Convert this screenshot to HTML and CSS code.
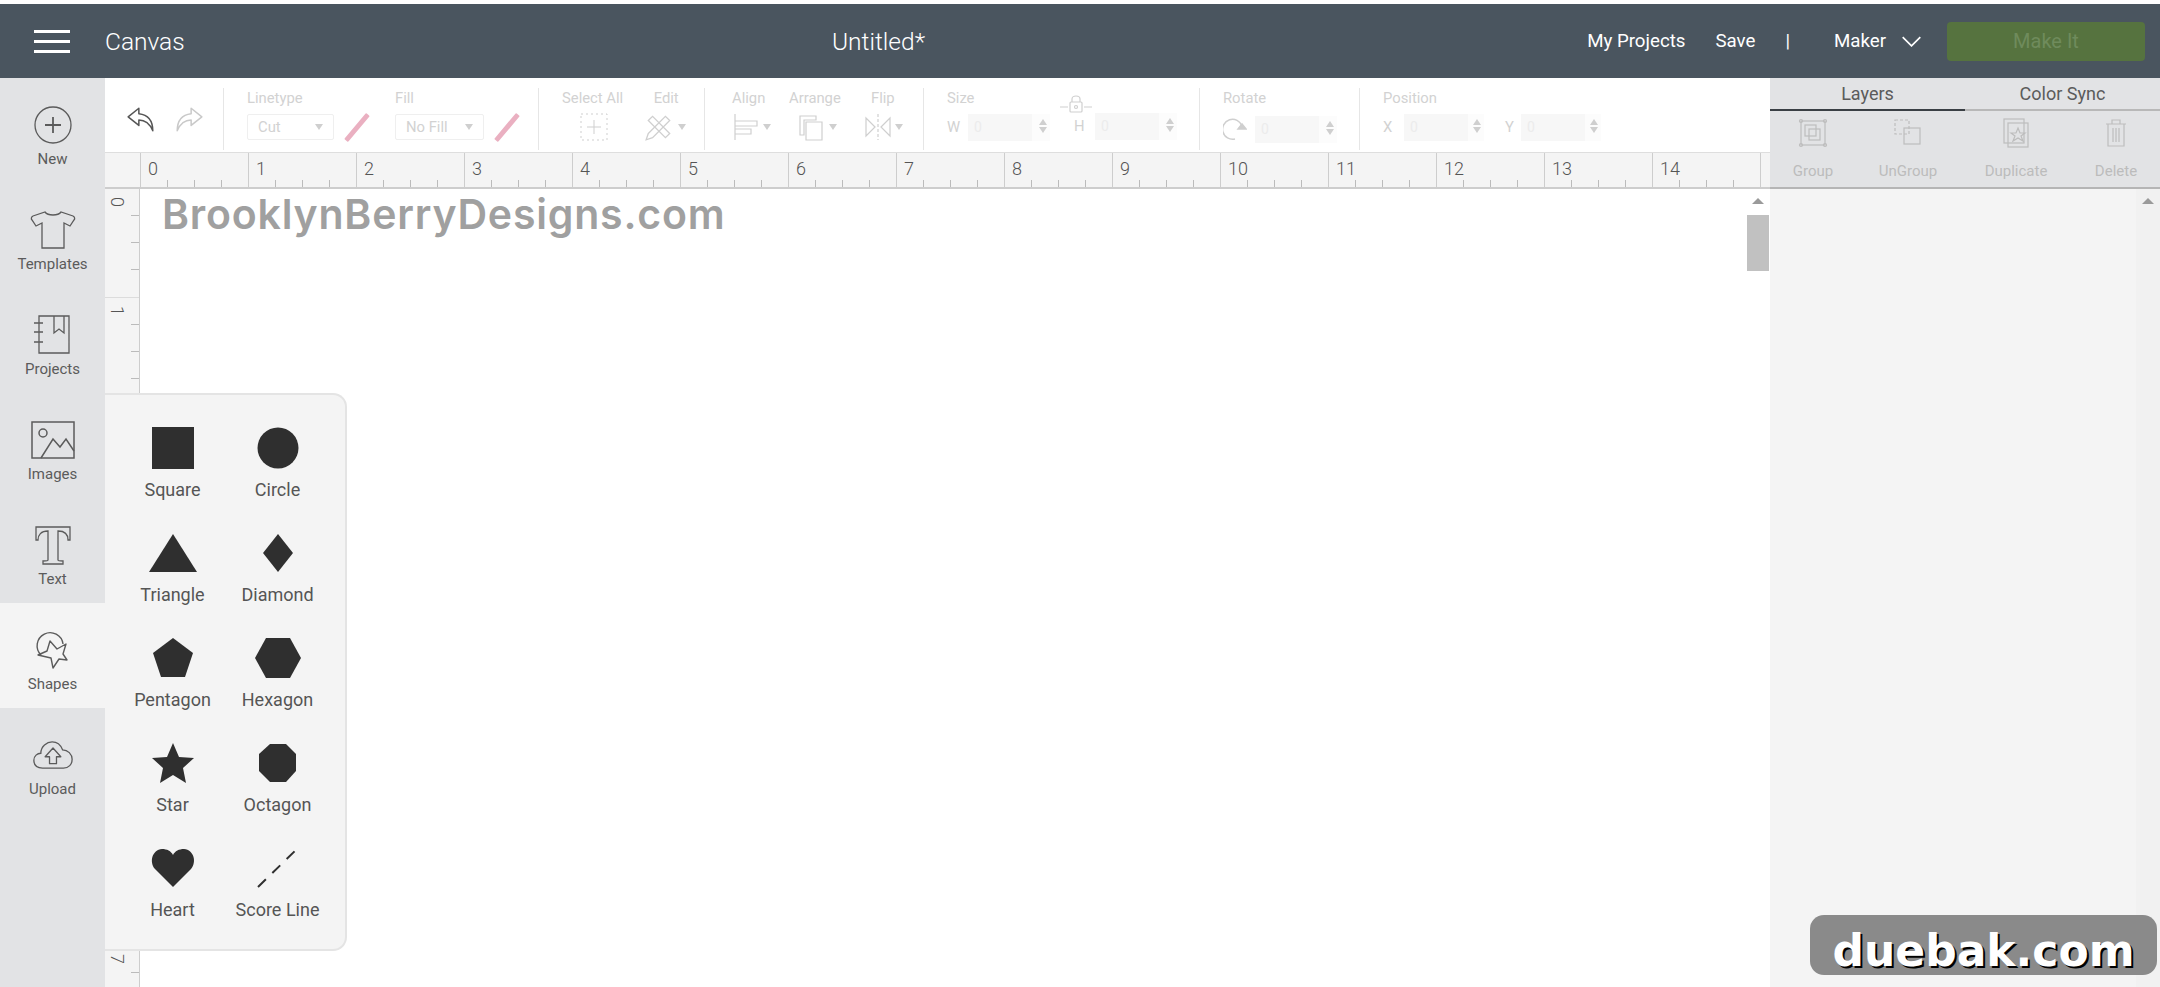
FILE: index.html
```html
<!DOCTYPE html>
<html lang="en">
<head>
    <meta charset="UTF-8">
    <title>Canvas</title>
    <link rel="stylesheet" href="styles.css">
</head>
<body>
    <div class="app">
        <header class="top-bar">
            <div class="top-left">
                <div class="burger"><span></span><span></span><span></span></div>
                <div class="page-name">Canvas</div>
            </div>
            <div class="doc-title">Untitled*</div>
            <div class="top-right">
                <span class="top-link">My Projects</span>
                <span class="top-link">Save</span>
                <span class="top-link pipe">|</span>
                <span class="top-link maker">Maker</span>
                <svg class="chevron" viewBox="0 0 18 10" fill="none" stroke="currentColor" stroke-width="1.5"><path d="M1 1l8 8 8-8"></path></svg>
                <div class="make-it">Make It</div>
            </div>
        </header>

        <div class="main">
            <nav class="sidebar">
                <div class="side-item">
                    <svg viewBox="0 0 40 40" fill="none" stroke="currentColor" stroke-width="1.3"><circle cx="20" cy="20" r="18"></circle><path d="M20 12v16M12 20h16" stroke-width="1.8"></path></svg>
                    <span>New</span>
                </div>
                <div class="side-item">
                    <svg class="wide" viewBox="0 0 46 40" fill="none" stroke="currentColor" stroke-width="1.3"><path d="M15 2c3 4 13 4 16 0l12 4c2 1 2 3 1 4l-4 6-6-3v25H12V13l-6 3-4-6c-1-1-1-3 1-4z"></path></svg>
                    <span>Templates</span>
                </div>
                <div class="side-item">
                    <svg viewBox="0 0 40 40" fill="none" stroke="currentColor" stroke-width="1.3"><path d="M6 1h30v37H6zM21 1v17l5-4 5 4V1M1 8h9M1 17h9M1 27h9"></path></svg>
                    <span>Projects</span>
                </div>
                <div class="side-item">
                    <svg class="wide" viewBox="0 0 46 40" fill="none" stroke="currentColor" stroke-width="1.5"><rect x="2" y="2" width="42" height="36"></rect><circle cx="13" cy="13" r="4"></circle><path d="M11 38l12-19 7 8 6-8 8 12"></path></svg>
                    <span>Images</span>
                </div>
                <div class="side-item">
                    <svg viewBox="0 0 40 40" fill="none" stroke="currentColor" stroke-width="1.3"><path d="M3 2h34v13h-2c0-5-3-9-10-9v29c0 1 1 1 5 1v3H10v-3c4 0 5 0 5-1V6C8 6 5 10 5 15H3z"></path></svg>
                    <span>Text</span>
                </div>
                <div class="side-item active">
                    <svg viewBox="0 0 40 40" fill="none" stroke="currentColor" stroke-width="1.4"><path d="M8 25A13 13 0 1 1 30 14"></path><path d="M17 11l7 8 9-5-3 10 4 6-8-1-6 9-2-10-13-3 9-4z" stroke-linejoin="round"></path></svg>
                    <span>Shapes</span>
                </div>
                <div class="side-item">
                    <svg viewBox="0 0 46 36" fill="none" stroke="currentColor" stroke-width="1.5"><path d="M11 33C4 33 1 29 1 24c0-5 4-8 8-8 0-8 7-13 13-13 6 0 10 4 12 9 6 0 11 5 11 11s-4 10-10 10z"></path><path d="M23 10l-9 10h5v8h8v-8h5z" stroke-linejoin="round"></path></svg>
                    <span>Upload</span>
                </div>
            </nav>

            <section class="workspace">
                <div class="toolbar">
                    <div class="tool-group history">
                        <svg class="undo" viewBox="0 0 28 24" fill="none" stroke="#555" stroke-width="1.4"><path d="M12 2L2 10l10 8v-5c6 0 10 3 13 10 0-9-4-15-13-16z" stroke-linejoin="round"></path></svg>
                        <svg class="undo" viewBox="0 0 28 24" fill="none" stroke="#c9c9c9" stroke-width="1.4"><path d="M16 2l10 8-10 8v-5c-6 0-10 3-13 10 0-9 4-15 13-16z" stroke-linejoin="round"></path></svg>
                    </div>
                    <div class="tool-group line-group">
                        <div class="field">
                            <label>Linetype</label>
                            <div class="control-row">
                                <div class="select line-select">Cut<i class="caret"></i></div>
                                <i class="swatch"></i>
                            </div>
                        </div>
                        <div class="field">
                            <label>Fill</label>
                            <div class="control-row">
                                <div class="select fill-select">No Fill<i class="caret"></i></div>
                                <i class="swatch"></i>
                            </div>
                        </div>
                    </div>
                    <div class="tool-group select-group">
                        <div class="field center select-all">
                            <label>Select All</label>
                            <svg class="tool-icon" viewBox="0 0 28 28" fill="none" stroke="#cfcfcf"><rect x="1" y="1" width="26" height="26" stroke-dasharray="2 3"></rect><path d="M14 7v14M7 14h14"></path></svg>
                        </div>
                        <div class="field center edit-field">
                            <label>Edit</label>
                            <div class="control-row">
                                <svg class="tool-icon edit-icon" viewBox="0 0 28 28" fill="none" stroke="#cfcfcf" stroke-width="1.2"><path d="M4 20L20 4l4 4L8 24l-6 2zM4 8l4-4 16 16-4 4z"></path></svg>
                                <i class="caret"></i>
                            </div>
                        </div>
                    </div>
                    <div class="tool-group arrange-group">
                        <div class="field align-field">
                            <label>Align</label>
                            <div class="control-row">
                                <svg class="tool-icon align-icon" viewBox="0 0 24 28" fill="none" stroke="#cfcfcf" stroke-width="1.2"><path d="M1 1v26M1 8h22v5H1M1 16h16v5H1"></path></svg>
                                <i class="caret"></i>
                            </div>
                        </div>
                        <div class="field arrange-field">
                            <label>Arrange</label>
                            <div class="control-row">
                                <svg class="tool-icon" viewBox="0 0 28 28" fill="none" stroke="#cfcfcf" stroke-width="1.2"><path d="M3 3h16v4H7v15H3zM9 9h16v18H9z"></path></svg>
                                <i class="caret"></i>
                            </div>
                        </div>
                        <div class="field flip-field">
                            <label>Flip</label>
                            <div class="control-row">
                                <svg class="tool-icon" viewBox="0 0 28 28" fill="none" stroke="#cfcfcf" stroke-width="1.2"><path d="M14 1v26" stroke-dasharray="3 2"></path><path d="M11 14L2 5v18zM17 14l9-9v18z"></path></svg>
                                <i class="caret"></i>
                            </div>
                        </div>
                    </div>
                    <div class="tool-group size-group">
                        <div class="field">
                            <label>Size</label>
                            <div class="control-row">
                                <span class="axis">W</span>
                                <div class="number w-input">0<i class="spin"></i></div>
                            </div>
                        </div>
                        <div class="field lock-field">
                            <svg class="lock" viewBox="0 0 36 20" fill="none" stroke="#cfcfcf" stroke-width="1.2"><path d="M14 8V5c0-4 8-4 8 0v3M2 13h8M26 13h8"></path><rect x="12" y="8" width="12" height="10" rx="1"></rect><circle cx="18" cy="13" r="1.5"></circle></svg>
                            <div class="control-row">
                                <span class="axis">H</span>
                                <div class="number h-input">0<i class="spin"></i></div>
                            </div>
                        </div>
                    </div>
                    <div class="tool-group rotate-group">
                        <div class="field">
                            <label>Rotate</label>
                            <div class="control-row rotate-row">
                                <svg class="rotate-icon" viewBox="0 0 24 24" fill="none" stroke="#cfcfcf" stroke-width="1.5"><path d="M19 9A10 10 0 1 0 12 22"></path><path d="M15 12h8l-4-5z" fill="#cfcfcf"></path></svg>
                                <div class="number h-input">0<i class="spin"></i></div>
                            </div>
                        </div>
                    </div>
                    <div class="tool-group">
                        <div class="field">
                            <label>Position</label>
                            <div class="control-row">
                                <span class="axis">X</span>
                                <div class="number pos-input">0<i class="spin"></i></div>
                                <span class="axis y-axis">Y</span>
                                <div class="number pos-input y-input">0<i class="spin"></i></div>
                            </div>
                        </div>
                    </div>
                </div>

                <div class="ruler-top">
                    <div class="ruler-corner"></div>
                    <div class="tick-cell">0</div>
                    <div class="tick-cell">1</div>
                    <div class="tick-cell">2</div>
                    <div class="tick-cell">3</div>
                    <div class="tick-cell">4</div>
                    <div class="tick-cell">5</div>
                    <div class="tick-cell">6</div>
                    <div class="tick-cell">7</div>
                    <div class="tick-cell">8</div>
                    <div class="tick-cell">9</div>
                    <div class="tick-cell">10</div>
                    <div class="tick-cell">11</div>
                    <div class="tick-cell">12</div>
                    <div class="tick-cell">13</div>
                    <div class="tick-cell">14</div>
                    <div class="tick-cell end"></div>
                </div>

                <div class="canvas-row">
                    <div class="ruler-left">
                        <div class="tick-row"><span>0</span></div>
                        <div class="tick-row"><span>1</span></div>
                        <div class="tick-row"><span>2</span></div>
                        <div class="tick-row"><span>3</span></div>
                        <div class="tick-row"><span>4</span></div>
                        <div class="tick-row"><span>5</span></div>
                        <div class="tick-row"><span>6</span></div>
                        <div class="tick-row"><span>7</span></div>
                    </div>
                    <div class="canvas">
                        <div class="watermark">BrooklynBerryDesigns.com</div>
                    </div>
                    <div class="scroll-track">
                        <i class="scroll-up"></i>
                        <div class="scroll-thumb"></div>
                    </div>
                </div>

                <div class="shapes-menu">
                    <div class="shape"><svg viewBox="0 0 42 42"><path d="M0 0h42v42H0z"></path></svg><span>Square</span></div>
                    <div class="shape"><svg viewBox="0 0 42 42"><circle cx="21" cy="21" r="20.5"></circle></svg><span>Circle</span></div>
                    <div class="shape"><svg viewBox="0 0 48 42"><path d="M24 2l24 38H0z"></path></svg><span>Triangle</span></div>
                    <div class="shape"><svg viewBox="0 0 42 42"><path d="M21 2l15 19-15 19L6 21z"></path></svg><span>Diamond</span></div>
                    <div class="shape"><svg viewBox="0 0 42 42"><path d="M21 1l20 15-8 24H9L1 16z"></path></svg><span>Pentagon</span></div>
                    <div class="shape"><svg viewBox="0 0 46 42"><path d="M11 1h24l11 20-11 20H11L0 21z"></path></svg><span>Hexagon</span></div>
                    <div class="shape"><svg viewBox="0 0 42 42"><path d="M21 1l6 14 15 1-11 10 3 15-13-8-13 8 3-15L0 16l15-1z"></path></svg><span>Star</span></div>
                    <div class="shape"><svg viewBox="0 0 42 42"><path d="M13 2h16l10 10v17L29 40H13L2 29V12z"></path></svg><span>Octagon</span></div>
                    <div class="shape"><svg viewBox="0 0 44 42"><path d="M22 40L4 22C-2 15 1 3 11 2c5 0 9 2 11 6 2-4 6-6 11-6 10 1 13 13 7 20z"></path></svg><span>Heart</span></div>
                    <div class="shape"><svg viewBox="0 0 42 42"><path class="score" d="M1 40L41 1" stroke-dasharray="11 9"></path></svg><span>Score Line</span></div>
                </div>
            </section>

            <aside class="layers">
                <div class="tabs">
                    <div class="tab on">Layers</div>
                    <div class="tab">Color Sync</div>
                </div>
                <div class="layer-actions">
                    <div class="layer-btn group-btn">
                        <svg viewBox="0 0 30 30" fill="none" stroke="#bdbdbd" stroke-width="1.2"><rect x="3" y="3" width="24" height="24"></rect><rect x="7" y="7" width="11" height="11"></rect><rect x="11" y="11" width="11" height="11"></rect><circle cx="3" cy="3" r="1.5"></circle><circle cx="27" cy="3" r="1.5"></circle><circle cx="3" cy="27" r="1.5"></circle><circle cx="27" cy="27" r="1.5"></circle></svg>
                        <span>Group</span>
                    </div>
                    <div class="layer-btn ungroup-btn">
                        <svg viewBox="0 0 30 30" fill="none" stroke="#bdbdbd" stroke-width="1.2"><rect x="2" y="2" width="14" height="14" stroke-dasharray="3 2"></rect><rect x="11" y="10" width="16" height="16"></rect></svg>
                        <span>UnGroup</span>
                    </div>
                    <div class="layer-btn dup-btn">
                        <svg viewBox="0 0 30 30" fill="none" stroke="#bdbdbd" stroke-width="1.2"><rect x="3" y="1" width="20" height="24"></rect><rect x="7" y="5" width="20" height="24"></rect><path d="M17 10l2 5 5 0-4 3 2 5-5-3-5 3 2-5-4-3 5 0z"></path></svg>
                        <span>Duplicate</span>
                    </div>
                    <div class="layer-btn del-btn">
                        <svg viewBox="0 0 30 30" fill="none" stroke="#bdbdbd" stroke-width="1.2"><path d="M5 6h20M11 6V2h8v4M7 6v22h16V6M12 10v14M15 10v14M18 10v14"></path></svg>
                        <span>Delete</span>
                    </div>
                </div>
                <div class="layer-list">
                    <div class="list-body"></div>
                    <div class="list-scroll"><i class="scroll-up"></i></div>
                </div>
            </aside>
        </div>

        <div class="site-badge">duebak.com</div>
    </div>
</body>
</html>
```

FILE: styles.css
```css
:root {
    --header: #4a555f;
    --side: #e2e3e5;
    --soft: #f4f4f4;
    --line: #cdcdcd;
    --faint: #d2d2d2;
    --text: #5b5b5b;
}

* {
    margin: 0;
    padding: 0;
    box-sizing: border-box;
    font-family: Roboto, "Liberation Sans", sans-serif;
}

html, body {
    height: 100%;
    overflow: hidden;
    background-color: #ffffff;
}

i {
    display: block;
}

.app {
    height: 100vh;
    padding-top: 4px;
    display: flex;
    flex-direction: column;
    position: relative;
}

/* top bar */
.top-bar {
    height: 74px;
    flex: none;
    background-color: var(--header);
    color: #ffffff;
    display: flex;
    align-items: center;
    position: relative;
}

.top-left {
    display: flex;
    align-items: center;
}

.burger {
    width: 36px;
    margin-left: 34px;
    display: flex;
    flex-direction: column;
    gap: 7px;
}

.burger span {
    height: 3px;
    background-color: #ffffff;
}

.page-name {
    margin-left: 35px;
    font-size: 24.5px;
    font-weight: 300;
}

.doc-title {
    position: absolute;
    left: 832px;
    font-size: 24.5px;
    font-weight: 300;
}

.top-right {
    margin-left: auto;
    display: flex;
    align-items: center;
    padding-right: 15px;
}

.top-link {
    font-size: 18.7px;
    margin-right: 30px;
}

.pipe {
    margin-right: 44px;
}

.maker {
    margin-right: 15px;
}

.chevron {
    width: 21px;
    height: 11px;
    margin-right: 25px;
}

.make-it {
    width: 198px;
    height: 39px;
    background-color: #56733f;
    border-radius: 4px;
    color: #6f8b5c;
    font-size: 20px;
    display: flex;
    align-items: center;
    justify-content: center;
}

/* layout */
.main {
    flex: 1;
    display: flex;
    min-height: 0;
}

.sidebar {
    width: 105px;
    flex: none;
    background-color: var(--side);
}

.side-item {
    height: 105px;
    padding-top: 27px;
    display: flex;
    flex-direction: column;
    align-items: center;
    color: var(--text);
    font-size: 15px;
}

.side-item svg {
    width: 40px;
    height: 40px;
    margin-bottom: 5px;
    flex: none;
}

.side-item svg.wide {
    width: 46px;
}

.side-item.active {
    background-color: var(--soft);
}

.workspace {
    flex: 1;
    min-width: 0;
    display: flex;
    flex-direction: column;
    position: relative;
}

/* toolbar */
.toolbar {
    height: 74px;
    flex: none;
    background-color: #ffffff;
    display: flex;
    align-items: stretch;
    padding: 10px 0 2px;
}

.tool-group {
    display: flex;
    align-items: flex-start;
    padding: 2px 0 0 23px;
    border-right: 1px solid #e6e6e6;
}

.tool-group:last-child {
    border-right: none;
}

.history {
    width: 119px;
    padding: 0 0 0 21px;
    gap: 18px;
    align-items: center;
}

.undo {
    width: 30px;
    height: 26px;
}

.line-group {
    width: 315px;
    gap: 21px;
}

.select-group {
    width: 166px;
    gap: 24px;
}

.edit-field {
    margin-left: -1px;
}

.edit-field .control-row {
    margin-left: -3px;
}

.arrange-group {
    width: 219px;
    padding-left: 27px;
}

.align-field {
    width: 57px;
}

.align-icon {
    width: 23px;
}

.arrange-field {
    width: 82px;
}

.arrange-field .control-row {
    margin-left: 7px;
}

.arrange-field .tool-icon {
    width: 30px;
}

.arrange-field .caret {
    margin-left: 1px;
}

.flip-field .control-row {
    margin-left: -7px;
}

.size-group {
    width: 276px;
}

.rotate-group {
    width: 160px;
}

.field {
    display: flex;
    flex-direction: column;
    gap: 7px;
}

.field.center {
    align-items: center;
}

.field label {
    font-size: 14.8px;
    line-height: 16px;
    color: var(--faint);
    white-space: nowrap;
}

.control-row {
    display: flex;
    align-items: center;
    height: 28px;
}

.select {
    height: 26px;
    border: 1px solid #efefef;
    border-radius: 2px;
    padding: 0 10px;
    font-size: 14.8px;
    color: var(--faint);
    display: flex;
    align-items: center;
    justify-content: space-between;
}

.line-select {
    width: 87px;
}

.fill-select {
    width: 89px;
}

.caret {
    width: 0;
    height: 0;
    border-left: 4px solid transparent;
    border-right: 4px solid transparent;
    border-top: 6px solid #cfcfcf;
}

.swatch {
    width: 34px;
    height: 5px;
    margin-left: 6px;
    background-color: #eab0c1;
    transform: rotate(-50deg);
    border-radius: 1px;
}

.tool-icon {
    width: 28px;
    height: 28px;
}

.select-all .tool-icon {
    margin-left: 3px;
}

.edit-icon {
    width: 32px;
    height: 30px;
}

.tool-icon + .caret {
    margin-left: 3px;
}

.axis {
    width: 16px;
    font-size: 14.8px;
    color: var(--faint);
}

.y-axis {
    margin-left: 21px;
}

.number {
    height: 27px;
    width: 82px;
    margin-left: 5px;
    padding-left: 6px;
    font-size: 14px;
    line-height: 27px;
    color: #ececec;
    background: linear-gradient(90deg, #f7f7f7 64px, #fcfcfc 64px);
    position: relative;
}

.h-input {
    width: 82px;
}

.pos-input {
    width: 80px;
}

.y-input {
    margin-left: 0;
}

.spin {
    position: absolute;
    right: 3px;
    top: 5px;
    width: 0;
    height: 0;
    border-left: 4px solid transparent;
    border-right: 4px solid transparent;
    border-bottom: 6px solid #cfcfcf;
}

.spin::after {
    content: "";
    position: absolute;
    left: -4px;
    top: 8px;
    width: 0;
    height: 0;
    border-left: 4px solid transparent;
    border-right: 4px solid transparent;
    border-top: 6px solid #cfcfcf;
}

.lock-field {
    margin-left: 24px;
    gap: 0;
}

.lock {
    width: 36px;
    height: 20px;
    margin-left: -16px;
    margin-top: 4px;
    margin-bottom: -2px;
}

.rotate-row {
    margin-top: 2px;
}

.rotate-icon {
    width: 24px;
    height: 24px;
    margin-right: 3px;
}

/* rulers */
.ruler-top {
    height: 37px;
    flex: none;
    background-color: var(--soft);
    border-top: 1px solid #dedede;
    border-bottom: 2px solid var(--line);
    display: flex;
}

.ruler-corner {
    width: 35px;
    flex: none;
}

.tick-cell {
    width: 108px;
    flex: none;
    padding: 5px 0 0 7px;
    font-size: 18px;
    font-weight: 300;
    color: #555;
    border-left: 1px solid var(--line);
    background-image:
        linear-gradient(#bbb, #bbb),
        linear-gradient(#bbb, #bbb),
        linear-gradient(#bbb, #bbb);
    background-size: 1px 7px;
    background-repeat: no-repeat;
    background-position: 26px 100%, 53px 100%, 80px 100%;
}

.tick-cell.end {
    width: 9px;
    background-image: none;
}

.canvas-row {
    flex: 1;
    display: flex;
    min-height: 0;
}

.ruler-left {
    width: 35px;
    flex: none;
    background-color: var(--soft);
    border-right: 1px solid var(--line);
    overflow: hidden;
}

.tick-row {
    height: 108px;
    border-top: 1px solid #dcdcdc;
    padding: 8px 0 0 5px;
    background-image:
        linear-gradient(#bbb, #bbb),
        linear-gradient(#bbb, #bbb),
        linear-gradient(#bbb, #bbb);
    background-size: 8px 1px;
    background-repeat: no-repeat;
    background-position: 100% 26px, 100% 53px, 100% 80px;
}

.tick-row:first-child {
    border-top: none;
}

.tick-row span {
    display: block;
    writing-mode: vertical-rl;
    font-size: 18px;
    font-weight: 300;
    color: #555;
    line-height: 14px;
}

.canvas {
    flex: 1;
    background-color: #ffffff;
    position: relative;
}

.watermark {
    position: absolute;
    left: 22px;
    top: 0;
    font-family: Inter, "Open Sans", sans-serif;
    font-size: 41px;
    font-weight: 600;
    letter-spacing: 0.8px;
    color: #a0a0a0;
    white-space: nowrap;
}

.scroll-track {
    width: 24px;
    flex: none;
    background-color: #ffffff;
    padding: 9px 1px 0 1px;
}

.scroll-up {
    width: 0;
    height: 0;
    margin: 0 auto;
    border-left: 6px solid transparent;
    border-right: 6px solid transparent;
    border-bottom: 6px solid #9a9a9a;
}

.scroll-thumb {
    height: 56px;
    margin-top: 11px;
    background-color: #c1c1c1;
}

/* shapes flyout */
.shapes-menu {
    position: absolute;
    left: 0;
    top: 315px;
    width: 242px;
    height: 558px;
    padding: 7px 16px 0 15px;
    background-color: var(--soft);
    border: 2px solid #e4e4e4;
    border-left: none;
    border-radius: 0 14px 14px 0;
    display: grid;
    grid-template-columns: 105px 105px;
    grid-auto-rows: 105px;
    align-content: start;
    z-index: 2;
}

.shape {
    display: flex;
    flex-direction: column;
    align-items: center;
    padding-top: 25px;
    font-size: 18px;
    color: #555;
}

.shape svg {
    height: 42px;
    width: 48px;
    fill: #2f2f2f;
    margin-bottom: 10px;
    flex: none;
}

.score {
    fill: none;
    stroke: #2f2f2f;
    stroke-width: 2;
}

/* right panel */
.layers {
    width: 390px;
    flex: none;
    display: flex;
    flex-direction: column;
    background-color: var(--soft);
}

.tabs {
    height: 33px;
    flex: none;
    display: flex;
    background-color: var(--side);
}

.tab {
    flex: 1;
    font-size: 18px;
    font-weight: 400;
    color: var(--text);
    text-align: center;
    line-height: 32px;
    border-bottom: 2px solid #b8b8b8;
}

.tab.on {
    border-bottom-color: #3a3f44;
}

.layer-actions {
    height: 78px;
    flex: none;
    position: relative;
    display: flex;
    background-color: var(--side);
    border-bottom: 2px solid #b5b5b5;
}

.layer-btn {
    display: flex;
    flex-direction: column;
    align-items: center;
    padding-top: 7px;
    font-size: 15px;
    color: #bcbcbc;
}

.layer-btn svg {
    width: 30px;
    height: 30px;
    margin-bottom: 14px;
}

.group-btn {
    width: 86px;
}

.ungroup-btn {
    width: 104px;
}

.dup-btn {
    width: 112px;
}

.del-btn {
    width: 88px;
}

.layer-list {
    flex: 1;
    display: flex;
}

.list-body {
    flex: 1;
}

.list-scroll {
    width: 24px;
    padding-top: 9px;
    background-color: #f1f1f1;
}

/* corner badge */
.site-badge {
    position: absolute;
    left: 1810px;
    top: 915px;
    width: 347px;
    height: 60px;
    padding-top: 11px;
    border-radius: 14px;
    background-color: #8a8a8a;
    color: #ffffff;
    font-family: "DejaVu Sans", sans-serif;
    font-size: 44px;
    font-weight: 700;
    line-height: 50px;
    text-align: center;
    text-shadow: 2px 2px 0 #000000;
    z-index: 5;
}
```
